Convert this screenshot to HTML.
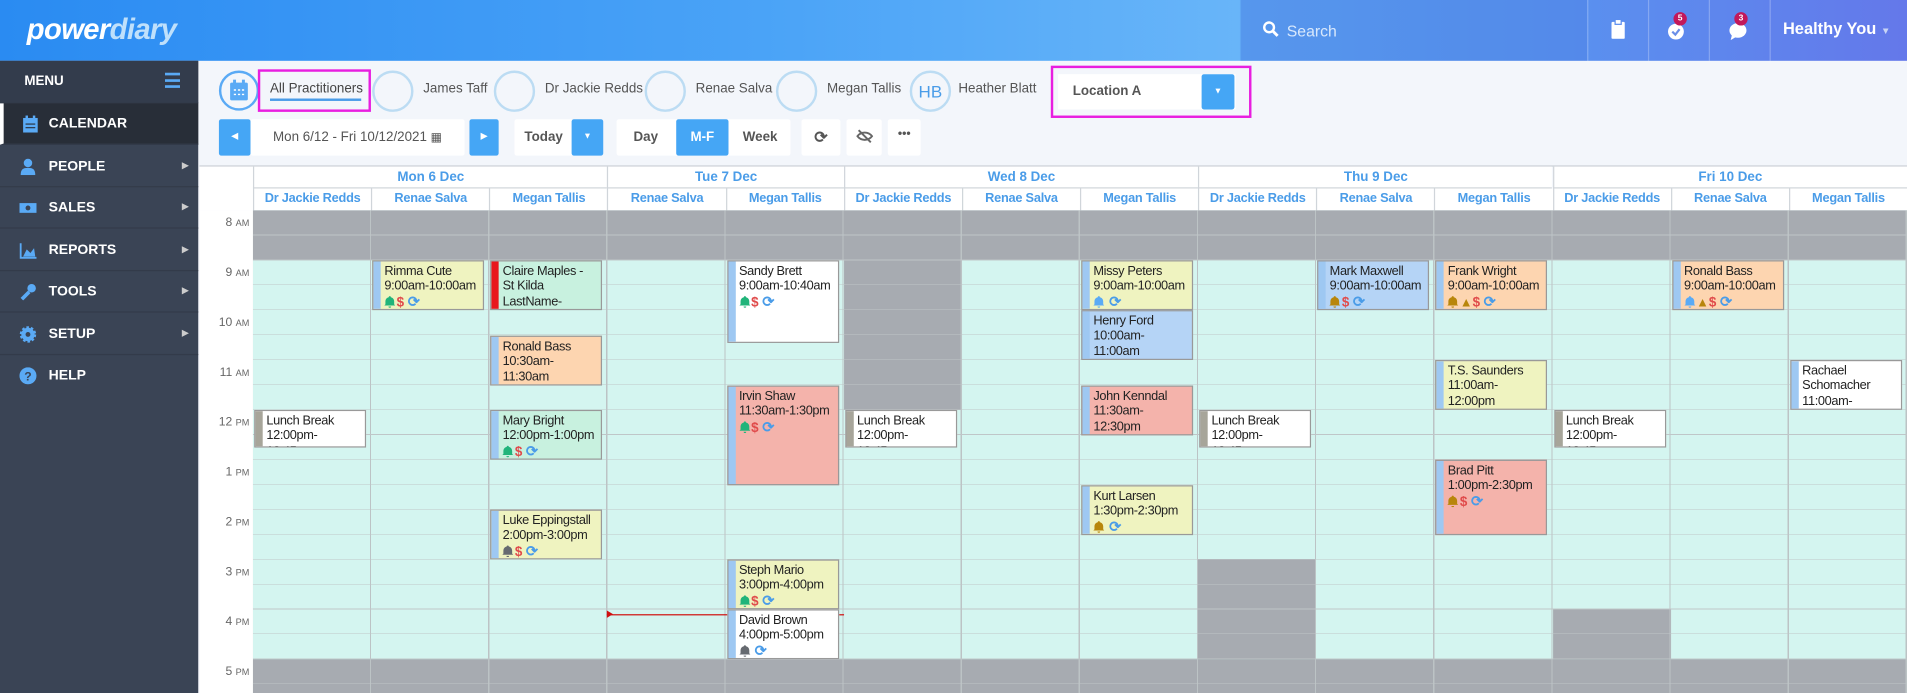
<!DOCTYPE html>
<html><head><meta charset="utf-8"><style>
*{box-sizing:border-box;margin:0;padding:0}
html,body{width:1907px;height:693px;overflow:hidden;background:#f3f6fb;font-family:"Liberation Sans",sans-serif}
#w{position:absolute;left:0;top:0;width:1568px;height:570px;transform:scale(1.21620);transform-origin:0 0;background:#f3f6fb}
.a{position:absolute}
#hdr{left:0;top:0;width:1568px;height:50px;background:linear-gradient(90deg,#2a8bf2 0%,#4aa3f7 40%,#68b5f9 65%,#5da0f3 65.1%,#5a90ef 83%,#6478ea 100%)}
.logo{left:22px;top:11px;font-size:24px;font-weight:bold;font-style:italic;color:#fff;letter-spacing:-0.5px}
.logo span{color:#bfe0fb}
.hsep{top:0;width:1px;height:50px;background:rgba(255,255,255,0.25)}
#side{left:0;top:50px;width:163px;height:520px;background:#3a4455}
.mi{position:absolute;left:0;width:163px;height:34px;color:#fff;font-size:11.5px;font-weight:bold;line-height:34px;padding-left:40px;border-bottom:1px solid #333b4a}
.mi .ic{position:absolute;left:16px;top:10px;width:14px;height:14px}
.mi .ar{position:absolute;right:8px;top:0;font-size:7px;color:#ccc}
.circ{width:34px;height:34px;border:2px solid #bcdcf3;border-radius:50%;top:58px}
.pn{top:67px;font-size:11px;color:#555}
.btn{background:#fff;border-radius:2px;font-size:11px;color:#555;font-weight:bold;text-align:center;line-height:30px;height:30px;top:98px}
.bb{background:#45a6f5;color:#fff}
#grid{left:208px;top:173px;width:1360px;height:397px;background:#d4f5f0}
.g{background:#a7abb1}
.lines{left:208px;top:173px;width:1360px;height:397px;background-image:repeating-linear-gradient(180deg,transparent 0,transparent 20px,#bfc6c8 20px,#bfc6c8 20.5px),repeating-linear-gradient(90deg,transparent 0,transparent 96.14px,#bcc3c5 96.14px,#bcc3c5 97.14px)}
.tl{left:164px;width:41px;text-align:right;font-size:10px;color:#666}
.tl small{font-size:7.5px}
.dh{top:137px;height:18px;line-height:18px;text-align:center;font-size:11px;font-weight:bold;color:#4a9ce8;background:#fff;border-left:1px solid #d0d5da;border-bottom:1px solid #d0d5da}
.ph{top:155px;height:18px;line-height:17px;text-align:center;font-size:10.5px;font-weight:bold;color:#4a9ce8;background:#fff;border-left:1px solid #d0d5da;width:97.14px;letter-spacing:-0.2px}
.ev{position:absolute;width:92px;border:1px solid #999;overflow:hidden;font-size:10.5px;letter-spacing:-0.3px;line-height:12.3px;color:#222;padding:2px 0 0 9px;font-family:"Liberation Sans",sans-serif}
.ev:before{content:"";position:absolute;left:0;top:0;bottom:0;width:6px;background:#9ec8f2}
.y{background:#eff3c0}.gr{background:#c8f1df}.o{background:#fdd5b0}.p{background:#f4b3ab}.b{background:#b5d4f6}.wh{background:#fff}
.lu:before{background:#a7a59a}
.rb:before{background:#e8161c}
.ic{height:12px;display:block;white-space:nowrap;letter-spacing:0}
.ic svg{vertical-align:-1px;margin-right:1px}
.d{color:#e04b4b;font-weight:bold;font-size:11px;margin:0 3px 0 0}
.s{color:#4a9ce8;font-weight:bold;font-size:12px}
</style></head><body><div id="w">
<div id="hdr" class="a"></div>
<div class="a logo">power<span>diary</span></div>
<div class="a" style="left:1020px;top:0;width:285px;height:50px;background:rgba(40,90,200,0.12)"></div>
<svg class="a" style="left:1038px;top:17px" width="14" height="14" viewBox="0 0 14 14"><circle cx="5.5" cy="5.5" r="4" fill="none" stroke="#fff" stroke-width="2"/><path d="M8.5 8.5l4 4" stroke="#fff" stroke-width="2.4"/></svg>
<div class="a" style="left:1058px;top:18px;font-size:13px;color:#d8e8fc">Search</div>
<div class="a hsep" style="left:1305px"></div><div class="a hsep" style="left:1355px"></div><div class="a hsep" style="left:1405px"></div><div class="a hsep" style="left:1455px"></div>
<svg class="a" style="left:1325px;top:16px" width="11" height="16" viewBox="0 0 11 16"><rect x="0" y="2" width="11" height="14" rx="1" fill="#fff"/><rect x="3" y="0" width="5" height="4" fill="#fff" stroke="#5a8cee"/></svg>
<svg class="a" style="left:1371px;top:17px" width="16" height="16" viewBox="0 0 16 16"><circle cx="7" cy="9" r="6.5" fill="#fff"/><path d="M4 9l2.5 2.5L10 7" stroke="#6a8ee8" stroke-width="1.8" fill="none"/></svg>
<div class="a" style="left:1376px;top:10px;width:11px;height:11px;border-radius:50%;background:#c2185b;color:#fff;font-size:7px;text-align:center;line-height:11px;font-weight:bold">5</div>
<svg class="a" style="left:1421px;top:17px" width="16" height="16" viewBox="0 0 16 16"><ellipse cx="8" cy="8" rx="7" ry="6" fill="#fff"/><path d="M3 12l-1 4 5-3z" fill="#fff"/></svg>
<div class="a" style="left:1426px;top:10px;width:11px;height:11px;border-radius:50%;background:#c2185b;color:#fff;font-size:7px;text-align:center;line-height:11px;font-weight:bold">3</div>
<div class="a" style="left:1466px;top:16px;font-size:13.5px;font-weight:bold;color:#fff">Healthy You <span style="font-size:8px;color:#c8d4f5">▼</span></div>

<div id="side" class="a">
<div class="mi" style="top:0;height:35px;line-height:35px;padding-left:20px;background:#333c4c;font-size:11px">MENU<span style="position:absolute;right:14px;top:0;color:#5aaaf5;font-size:16px">☰</span></div>
<div class="mi" style="top:35px;background:#282e38;border-left:3px solid #fff;padding-left:37px">CALENDAR<svg class="ic" style="left:15px" viewBox="0 0 14 14"><rect x="1" y="2" width="12" height="12" fill="#5aaaf5"/><rect x="3" y="0" width="2" height="4" fill="#5aaaf5"/><rect x="9" y="0" width="2" height="4" fill="#5aaaf5"/><path d="M3 7h8M3 10h8" stroke="#282e38"/></svg></div>
<div class="mi" style="top:70px">PEOPLE<span class="ar">▶</span><svg class="ic" viewBox="0 0 14 14"><circle cx="7" cy="4" r="3.5" fill="#5aaaf5"/><path d="M1 14c0-5 2-6 6-6s6 1 6 6z" fill="#5aaaf5"/></svg></div>
<div class="mi" style="top:104px">SALES<span class="ar">▶</span><svg class="ic" viewBox="0 0 14 14"><rect x="0" y="3" width="14" height="8" fill="#5aaaf5"/><circle cx="7" cy="7" r="2" fill="#3a4455"/></svg></div>
<div class="mi" style="top:139px">REPORTS<span class="ar">▶</span><svg class="ic" viewBox="0 0 14 14"><path d="M1 1v12h13" stroke="#5aaaf5" stroke-width="1.5" fill="none"/><path d="M3 12l3-6 3 3 3-4 1 7z" fill="#5aaaf5"/></svg></div>
<div class="mi" style="top:173px">TOOLS<span class="ar">▶</span><svg class="ic" viewBox="0 0 14 14"><path d="M2 13l6-6" stroke="#5aaaf5" stroke-width="3"/><circle cx="10" cy="4" r="3.5" fill="#5aaaf5"/></svg></div>
<div class="mi" style="top:208px">SETUP<span class="ar">▶</span><svg class="ic" viewBox="0 0 14 14"><circle cx="7" cy="7" r="5.5" fill="#5aaaf5" stroke="#5aaaf5" stroke-width="2.5" stroke-dasharray="2 1.5"/><circle cx="7" cy="7" r="2" fill="#3a4455"/></svg></div>
<div class="mi" style="top:242px;border:0">HELP<svg class="ic" viewBox="0 0 14 14"><circle cx="7" cy="7" r="7" fill="#5aaaf5"/><text x="7" y="11" font-size="10" font-weight="bold" fill="#3a4455" text-anchor="middle" font-family="Liberation Sans">?</text></svg></div>
</div>

<div class="a circ" style="left:180px;width:33px;height:33px;border-color:#5aaaf5"></div>
<svg class="a" style="left:188px;top:65px" width="17" height="18" viewBox="0 0 14 14"><rect x="1" y="2" width="12" height="12" rx="1" fill="#5aaaf5"/><rect x="3" y="0" width="2" height="4" fill="#5aaaf5"/><rect x="9" y="0" width="2" height="4" fill="#5aaaf5"/><path d="M3.5 7h1.5M6.3 7h1.5M9 7h1.5M3.5 10h1.5M6.3 10h1.5M9 10h1.5" stroke="#fff"/></svg>
<div class="a" style="left:212px;top:57px;width:93px;height:35px;border:2px solid #e81ee0"></div>
<div class="a pn" style="left:222px;color:#444">All Practitioners</div>
<div class="a" style="left:222px;top:81px;width:75px;height:2px;background:#4a9ce8"></div>
<div class="a circ" style="left:306px"></div><div class="a pn" style="left:348px">James Taff</div>
<div class="a circ" style="left:406px"></div><div class="a pn" style="left:448px">Dr Jackie Redds</div>
<div class="a circ" style="left:530px"></div><div class="a pn" style="left:572px">Renae Salva</div>
<div class="a circ" style="left:638px"></div><div class="a pn" style="left:680px">Megan Tallis</div>
<div class="a circ" style="left:748px;color:#4a9ce8;font-size:14px;text-align:center;line-height:30px">HB</div><div class="a pn" style="left:788px">Heather Blatt</div>
<div class="a" style="left:864px;top:54px;width:165px;height:43px;border:2px solid #e81ee0"></div>
<div class="a" style="left:870px;top:61px;width:146px;height:29px;background:#fff;font-size:11px;font-weight:bold;color:#555;line-height:29px;padding-left:12px">Location A</div>
<div class="a bb" style="left:988px;top:61px;width:27px;height:29px;border-radius:2px;color:#fff;font-size:7px;text-align:center;line-height:29px">▼</div>

<div class="a btn bb" style="left:180px;width:26px;font-size:7px">◀</div>
<div class="a btn" style="left:206px;width:176px;font-weight:normal;color:#555">Mon 6/12 - Fri 10/12/2021 <span style="font-size:10px">▦</span></div>
<div class="a btn bb" style="left:386px;width:24px;font-size:7px">▶</div>
<div class="a btn" style="left:423px;width:48px">Today</div>
<div class="a btn bb" style="left:470px;width:26px;font-size:7px">▼</div>
<div class="a btn" style="left:507px;width:143px"></div>
<div class="a btn" style="left:509px;width:44px;background:none">Day</div>
<div class="a btn bb" style="left:556px;width:43px">M-F</div>
<div class="a btn" style="left:602px;width:46px;background:none">Week</div>
<div class="a btn" style="left:659px;width:32px;font-size:13px">⟳</div>
<div class="a btn" style="left:696px;width:29px"><svg width="14" height="12" viewBox="0 0 14 12" style="vertical-align:-2px"><path d="M1 6c3-4 9-4 12 0-3 4-9 4-12 0z" fill="none" stroke="#666" stroke-width="1.6"/><path d="M2 1l10 10" stroke="#666" stroke-width="1.6"/></svg></div>
<div class="a btn" style="left:730px;width:27px;font-size:10px;line-height:26px">•••</div>

<div class="a" style="left:164px;top:136px;width:1404px;height:1px;background:#c9ced4"></div>
<div class="a" style="left:164px;top:137px;width:44px;height:36px;background:#fff"></div>
<div class="a dh" style="left:208px;width:291.4px">Mon 6 Dec</div>
<div class="a dh" style="left:499.4px;width:194.3px">Tue 7 Dec</div>
<div class="a dh" style="left:693.7px;width:291.4px">Wed 8 Dec</div>
<div class="a dh" style="left:985.1px;width:291.4px">Thu 9 Dec</div>
<div class="a dh" style="left:1276.5px;width:291.5px">Fri 10 Dec</div>
<div class="a ph" style="left:208px">Dr Jackie Redds</div>
<div class="a ph" style="left:305.1px">Renae Salva</div>
<div class="a ph" style="left:402.3px">Megan Tallis</div>
<div class="a ph" style="left:499.4px">Renae Salva</div>
<div class="a ph" style="left:596.6px">Megan Tallis</div>
<div class="a ph" style="left:693.7px">Dr Jackie Redds</div>
<div class="a ph" style="left:790.8px">Renae Salva</div>
<div class="a ph" style="left:888px">Megan Tallis</div>
<div class="a ph" style="left:985.1px">Dr Jackie Redds</div>
<div class="a ph" style="left:1082.3px">Renae Salva</div>
<div class="a ph" style="left:1179.4px">Megan Tallis</div>
<div class="a ph" style="left:1276.5px">Dr Jackie Redds</div>
<div class="a ph" style="left:1373.7px">Renae Salva</div>
<div class="a ph" style="left:1470.8px">Megan Tallis</div>

<div class="a" style="left:164px;top:173px;width:44px;height:397px;background:#fff"></div>
<div class="a tl" style="top:178px">8 <small>AM</small></div>
<div class="a tl" style="top:219px">9 <small>AM</small></div>
<div class="a tl" style="top:260px">10 <small>AM</small></div>
<div class="a tl" style="top:301px">11 <small>AM</small></div>
<div class="a tl" style="top:342px">12 <small>PM</small></div>
<div class="a tl" style="top:383px">1 <small>PM</small></div>
<div class="a tl" style="top:424px">2 <small>PM</small></div>
<div class="a tl" style="top:465px">3 <small>PM</small></div>
<div class="a tl" style="top:506px">4 <small>PM</small></div>
<div class="a tl" style="top:547px">5 <small>PM</small></div>

<div id="grid" class="a"></div>
<div class="a g" style="left:208px;top:173px;width:1360px;height:41px"></div>
<div class="a g" style="left:693.7px;top:214px;width:97.1px;height:123px"></div>
<div class="a g" style="left:985.1px;top:460px;width:97.1px;height:82px"></div>
<div class="a g" style="left:1276.5px;top:501px;width:97.1px;height:41px"></div>
<div class="a g" style="left:208px;top:542px;width:1360px;height:28px"></div>
<div class="a lines"></div>
<div class="a" style="left:499px;top:505px;width:195px;height:1px;background:#d01010"></div>
<div class="a" style="left:499px;top:502px;width:0;height:0;border-left:5px solid #d01010;border-top:3.5px solid transparent;border-bottom:3.5px solid transparent"></div>

<div class="ev lu wh" style="left:209px;top:337px;height:31px">Lunch Break<br>12:00pm-<br>12:45</div>
<div class="ev lu wh" style="left:694.7px;top:337px;height:31px">Lunch Break<br>12:00pm-<br>12:45</div>
<div class="ev lu wh" style="left:986.1px;top:337px;height:31px">Lunch Break<br>12:00pm-<br>12:45</div>
<div class="ev lu wh" style="left:1277.5px;top:337px;height:31px">Lunch Break<br>12:00pm-<br>12:45</div>

<div class="ev y" style="left:306.1px;top:214px;height:41px">Rimma Cute<br>9:00am-10:00am<span class="ic"><svg width="9" height="10" viewBox="0 0 10 11"><path d="M5 0.5a1 1 0 0 1 1 1c2 .5 3 2 3 4v2.5l1 1H0l1-1V5.5c0-2 1-3.5 3-4a1 1 0 0 1 1-1zM3.8 10h2.4a1.2 1.2 0 0 1-2.4 0z" fill="#21b47a"/></svg><span class="d">$</span><span class="s">⟳</span></span></div>
<div class="ev gr rb" style="left:403.3px;top:214px;height:41px">Claire Maples -<br>St Kilda<br>LastName-<br>2400062</div>
<div class="ev o" style="left:403.3px;top:276px;height:41px">Ronald Bass<br>10:30am-<br>11:30am<span class="ic"><span style="color:#21b47a">▲</span> <span style="color:#b8860b">▲</span> <span class="d">$</span><span class="s">⟳</span></span></div>
<div class="ev gr" style="left:403.3px;top:337px;height:41px">Mary Bright<br>12:00pm-1:00pm<span class="ic"><svg width="9" height="10" viewBox="0 0 10 11"><path d="M5 0.5a1 1 0 0 1 1 1c2 .5 3 2 3 4v2.5l1 1H0l1-1V5.5c0-2 1-3.5 3-4a1 1 0 0 1 1-1zM3.8 10h2.4a1.2 1.2 0 0 1-2.4 0z" fill="#21b47a"/></svg><span class="d">$</span><span class="s">⟳</span></span></div>
<div class="ev y" style="left:403.3px;top:419px;height:41px">Luke Eppingstall<br>2:00pm-3:00pm<span class="ic"><svg width="9" height="10" viewBox="0 0 10 11"><path d="M5 0.5a1 1 0 0 1 1 1c2 .5 3 2 3 4v2.5l1 1H0l1-1V5.5c0-2 1-3.5 3-4a1 1 0 0 1 1-1zM3.8 10h2.4a1.2 1.2 0 0 1-2.4 0z" fill="#666a70"/></svg><span class="d">$</span><span class="s">⟳</span></span></div>

<div class="ev wh" style="left:597.6px;top:214px;height:68px">Sandy Brett<br>9:00am-10:40am<span class="ic"><svg width="9" height="10" viewBox="0 0 10 11"><path d="M5 0.5a1 1 0 0 1 1 1c2 .5 3 2 3 4v2.5l1 1H0l1-1V5.5c0-2 1-3.5 3-4a1 1 0 0 1 1-1zM3.8 10h2.4a1.2 1.2 0 0 1-2.4 0z" fill="#21b47a"/></svg><span class="d">$</span><span class="s">⟳</span></span></div>
<div class="ev p" style="left:597.6px;top:317px;height:82px">Irvin Shaw<br>11:30am-1:30pm<span class="ic"><svg width="9" height="10" viewBox="0 0 10 11"><path d="M5 0.5a1 1 0 0 1 1 1c2 .5 3 2 3 4v2.5l1 1H0l1-1V5.5c0-2 1-3.5 3-4a1 1 0 0 1 1-1zM3.8 10h2.4a1.2 1.2 0 0 1-2.4 0z" fill="#21b47a"/></svg><span class="d">$</span><span class="s">⟳</span></span></div>
<div class="ev y" style="left:597.6px;top:460px;height:41px">Steph Mario<br>3:00pm-4:00pm<span class="ic"><svg width="9" height="10" viewBox="0 0 10 11"><path d="M5 0.5a1 1 0 0 1 1 1c2 .5 3 2 3 4v2.5l1 1H0l1-1V5.5c0-2 1-3.5 3-4a1 1 0 0 1 1-1zM3.8 10h2.4a1.2 1.2 0 0 1-2.4 0z" fill="#21b47a"/></svg><span class="d">$</span><span class="s">⟳</span></span></div>
<div class="ev wh" style="left:597.6px;top:501px;height:41px">David Brown<br>4:00pm-5:00pm<span class="ic"><svg width="9" height="10" viewBox="0 0 10 11"><path d="M5 0.5a1 1 0 0 1 1 1c2 .5 3 2 3 4v2.5l1 1H0l1-1V5.5c0-2 1-3.5 3-4a1 1 0 0 1 1-1zM3.8 10h2.4a1.2 1.2 0 0 1-2.4 0z" fill="#666a70"/></svg> <span class="s">⟳</span></span></div>

<div class="ev y" style="left:889px;top:214px;height:41px">Missy Peters<br>9:00am-10:00am<span class="ic"><svg width="9" height="10" viewBox="0 0 10 11"><path d="M5 0.5a1 1 0 0 1 1 1c2 .5 3 2 3 4v2.5l1 1H0l1-1V5.5c0-2 1-3.5 3-4a1 1 0 0 1 1-1zM3.8 10h2.4a1.2 1.2 0 0 1-2.4 0z" fill="#5aaaf5"/></svg> <span class="s">⟳</span></span></div>
<div class="ev b" style="left:889px;top:255px;height:41px">Henry Ford<br>10:00am-<br>11:00am</div>
<div class="ev p" style="left:889px;top:317px;height:41px">John Kenndal<br>11:30am-<br>12:30pm</div>
<div class="ev y" style="left:889px;top:399px;height:41px">Kurt Larsen<br>1:30pm-2:30pm<span class="ic"><svg width="9" height="10" viewBox="0 0 10 11"><path d="M5 0.5a1 1 0 0 1 1 1c2 .5 3 2 3 4v2.5l1 1H0l1-1V5.5c0-2 1-3.5 3-4a1 1 0 0 1 1-1zM3.8 10h2.4a1.2 1.2 0 0 1-2.4 0z" fill="#b8860b"/></svg> <span class="s">⟳</span></span></div>

<div class="ev b" style="left:1083.3px;top:214px;height:41px">Mark Maxwell<br>9:00am-10:00am<span class="ic"><svg width="9" height="10" viewBox="0 0 10 11"><path d="M5 0.5a1 1 0 0 1 1 1c2 .5 3 2 3 4v2.5l1 1H0l1-1V5.5c0-2 1-3.5 3-4a1 1 0 0 1 1-1zM3.8 10h2.4a1.2 1.2 0 0 1-2.4 0z" fill="#b8860b"/></svg><span class="d">$</span><span class="s">⟳</span></span></div>
<div class="ev o" style="left:1180.4px;top:214px;height:41px">Frank Wright<br>9:00am-10:00am<span class="ic"><svg width="9" height="10" viewBox="0 0 10 11"><path d="M5 0.5a1 1 0 0 1 1 1c2 .5 3 2 3 4v2.5l1 1H0l1-1V5.5c0-2 1-3.5 3-4a1 1 0 0 1 1-1zM3.8 10h2.4a1.2 1.2 0 0 1-2.4 0z" fill="#b8860b"/></svg><span style="color:#b8860b">▲</span><span class="d">$</span><span class="s">⟳</span></span></div>
<div class="ev y" style="left:1180.4px;top:296px;height:41px">T.S. Saunders<br>11:00am-<br>12:00pm</div>
<div class="ev p" style="left:1180.4px;top:378px;height:62px">Brad Pitt<br>1:00pm-2:30pm<span class="ic"><svg width="9" height="10" viewBox="0 0 10 11"><path d="M5 0.5a1 1 0 0 1 1 1c2 .5 3 2 3 4v2.5l1 1H0l1-1V5.5c0-2 1-3.5 3-4a1 1 0 0 1 1-1zM3.8 10h2.4a1.2 1.2 0 0 1-2.4 0z" fill="#b8860b"/></svg><span class="d">$</span><span class="s">⟳</span></span></div>

<div class="ev o" style="left:1374.7px;top:214px;height:41px">Ronald Bass<br>9:00am-10:00am<span class="ic"><svg width="9" height="10" viewBox="0 0 10 11"><path d="M5 0.5a1 1 0 0 1 1 1c2 .5 3 2 3 4v2.5l1 1H0l1-1V5.5c0-2 1-3.5 3-4a1 1 0 0 1 1-1zM3.8 10h2.4a1.2 1.2 0 0 1-2.4 0z" fill="#5aaaf5"/></svg><span style="color:#b8860b">▲</span><span class="d">$</span><span class="s">⟳</span></span></div>
<div class="ev wh" style="left:1471.8px;top:296px;height:41px">Rachael<br>Schomacher<br>11:00am-<br>12:00</div>
</div></body></html>
